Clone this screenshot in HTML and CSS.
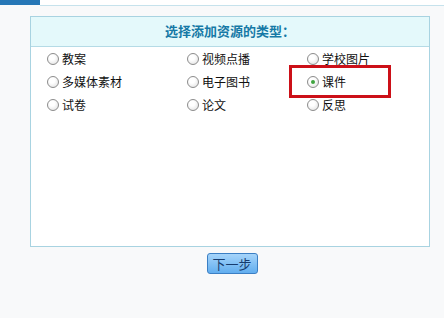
FILE: index.html
```html
<!DOCTYPE html>
<html lang="zh-CN">
	<head>
		<meta charset="utf-8">
		<link rel="stylesheet" href="styles.css">
	</head>
	<body>
		<div class="topbar">
			<div class="tab"></div>
			<div class="line"></div>
		</div>
		<div class="panel">
			<div class="panel-title">选择添加资源的类型：</div>
			<ul class="types">
				<li><span class="radio"></span>教案</li>
				<li><span class="radio"></span>视频点播</li>
				<li><span class="radio"></span>学校图片</li>
				<li><span class="radio"></span>多媒体素材</li>
				<li><span class="radio"></span>电子图书</li>
				<li class="marked"><span class="radio checked"></span>课件<span class="mark"></span></li>
				<li><span class="radio"></span>试卷</li>
				<li><span class="radio"></span>论文</li>
				<li><span class="radio"></span>反思</li>
			</ul>
		</div>
		<div class="actions">
			<button class="next">下一步</button>
		</div>
	</body>
</html>
```
FILE: styles.css
```css
*, *::before, *::after {
	margin: 0;
	padding: 0;
	box-sizing: border-box;
}
body {
	background-color: #f8f9fa;
	font-family: "SimSun", "Noto Sans CJK SC", sans-serif;
	font-size: 12px;
	color: #111;
	width: 444px;
	height: 318px;
	overflow: hidden;
}
.topbar {
	display: flex;
	height: 6px;
}
.tab {
	width: 40px;
	height: 5px;
	background-color: #2677b6;
}
.line {
	flex: 1;
	height: 6px;
	border-bottom: 1px solid #c6e2ec;
	background-color: #fff;
}
.panel {
	margin: 10px 0 0 30px;
	width: 400px;
	height: 231px;
	border: 1px solid #a8d3e1;
	background-color: #fff;
}
.panel-title {
	height: 30px;
	line-height: 28px;
	text-align: center;
	background-color: #e4f9fb;
	border-bottom: 1px solid #b5dbe6;
	color: #1679a6;
	font-weight: bold;
	font-size: 13px;
}
.types {
	list-style: none;
	display: grid;
	grid-template-columns: 140px 120px 1fr;
	grid-auto-rows: 23px;
	padding: 0 0 0 16px;
}
.types li {
	display: flex;
	align-items: center;
	line-height: 23px;
}
.radio {
	width: 12px;
	height: 12px;
	margin-right: 3px;
	border: 1px solid #8c8c8c;
	border-radius: 50%;
	background: radial-gradient(circle at 40% 35%, #fff 30%, #dcdcdc 100%);
	position: relative;
}
.radio.checked::after {
	content: "";
	position: absolute;
	left: 3px;
	top: 3px;
	width: 4px;
	height: 4px;
	border-radius: 50%;
	background-color: #3fa33f;
}
.marked {
	position: relative;
}
.mark {
	position: absolute;
	left: -18px;
	top: -5px;
	width: 102px;
	height: 33px;
	border: 3px solid #cc1018;
}
.actions {
	display: flex;
	justify-content: center;
	padding: 6px 0 0 0;
}
.next {
	width: 51px;
	height: 21px;
	margin-left: 20px;
	border: 1px solid #3b7fc4;
	border-radius: 3px;
	background: linear-gradient(#a5d4fa, #62aeef);
	color: #173c6e;
	font-family: "SimSun", "Noto Sans CJK SC", sans-serif;
	font-size: 13px;
	line-height: 18px;
}
```
